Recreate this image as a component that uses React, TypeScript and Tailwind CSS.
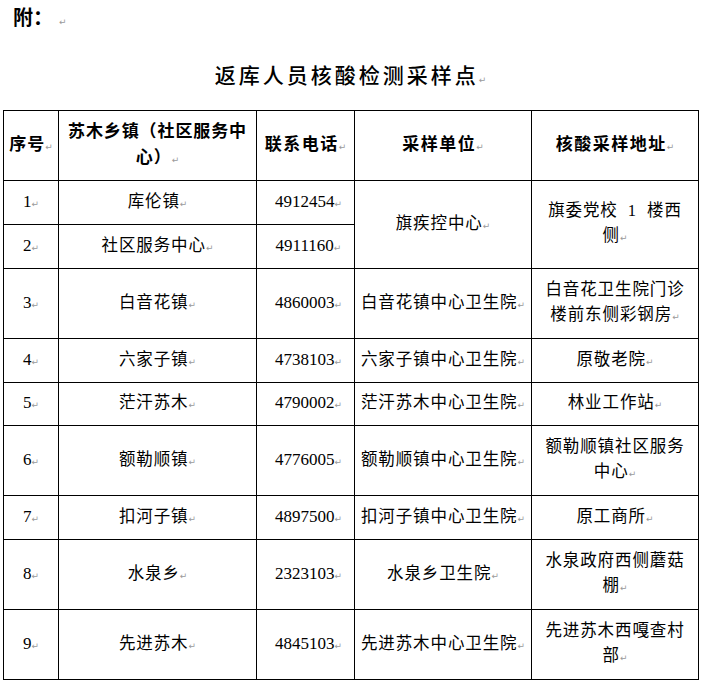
import React from "react";

const M = ({ c = "" }: { c?: string }) => (
  <span className={"font-['DejaVu_Sans',sans-serif] text-[9px] font-normal tracking-normal text-[#9a9a9a] " + c}>↵</span>
);

const td = "border border-black text-center align-middle p-0";
const zh = "text-[16.5px] tracking-[0.9px] leading-[25px] font-normal";
const num = "text-[17px] leading-[25px] font-normal";
const hd = "text-[17px] font-bold leading-[26px]";

type Row = { n: string; town: string; tel: string; unit: string; addr: React.ReactNode[]; h: string };

const rows: Row[] = [
  { n: "3", town: "白音花镇", tel: "4860003", unit: "白音花镇中心卫生院", addr: ["白音花卫生院门诊", "楼前东侧彩钢房"], h: "h-[70px]" },
  { n: "4", town: "六家子镇", tel: "4738103", unit: "六家子镇中心卫生院", addr: ["原敬老院"], h: "h-[44px]" },
  { n: "5", town: "茫汗苏木", tel: "4790002", unit: "茫汗苏木中心卫生院", addr: ["林业工作站"], h: "h-[43px]" },
  { n: "6", town: "额勒顺镇", tel: "4776005", unit: "额勒顺镇中心卫生院", addr: ["额勒顺镇社区服务", "中心"], h: "h-[70px]" },
  { n: "7", town: "扣河子镇", tel: "4897500", unit: "扣河子镇中心卫生院", addr: ["原工商所"], h: "h-[44px]" },
  { n: "8", town: "水泉乡", tel: "2323103", unit: "水泉乡卫生院", addr: ["水泉政府西侧蘑菇", "棚"], h: "h-[70px]" },
  { n: "9", town: "先进苏木", tel: "4845103", unit: "先进苏木中心卫生院", addr: ["先进苏木西嘎查村", "部"], h: "h-[70px]" },
];

const Addr = ({ lines }: { lines: React.ReactNode[] }) => (
  <div className={zh}>
    {lines.map((l, i) => (
      <div key={i} className="whitespace-nowrap">
        {l}
        {i === lines.length - 1 && <M />}
      </div>
    ))}
  </div>
);

const EndMark = () => (
  <td className="align-top p-0 pl-[2px] pt-[9px] border-0 leading-[10px]">
    <M />
  </td>
);

export default function App() {
  return (
    <div className="w-[701px] h-[682px] overflow-hidden bg-white text-black font-['Liberation_Serif','Noto_Sans_CJK_SC',serif]">
      <div className="pt-[5px] pl-[13px] text-[20px] font-bold leading-[26px] font-['Liberation_Serif','Noto_Sans_CJK_SC',sans-serif]">
        附：<M c="ml-[6px]" />
      </div>
      <div className="mt-[25px] text-center text-[21px] tracking-[3px] leading-[28px] font-medium font-['Noto_Sans_CJK_SC',sans-serif]">
        返库人员核酸检测采样点<M />
      </div>
      <table className="mt-[16px] ml-[3px] border-collapse table-fixed w-[705px]">
        <colgroup>
          <col className="w-[55px]" />
          <col className="w-[198px]" />
          <col className="w-[98px]" />
          <col className="w-[177px]" />
          <col className="w-[167px]" />
          <col className="w-[10px]" />
        </colgroup>
        <tbody>
          <tr className="h-[70px]">
            <td className={td}>
              <div className={hd + " tracking-[1px]"}>序号<M /></div>
            </td>
            <td className={td}>
              <div className={hd + " tracking-[0.9px]"}>
                <div className="whitespace-nowrap">苏木乡镇（社区服务中</div>
                <div>心）<M /></div>
              </div>
            </td>
            <td className={td}>
              <div className={hd + " tracking-[1.5px] whitespace-nowrap"}>联系电话<M /></div>
            </td>
            <td className={td}>
              <div className={hd + " tracking-[1.5px]"}>采样单位<M /></div>
            </td>
            <td className={td}>
              <div className={hd + " tracking-[1.5px] whitespace-nowrap"}>核酸采样地址<M /></div>
            </td>
            <EndMark />
          </tr>
          <tr className="h-[44px]">
            <td className={td}><div className={num}>1<M /></div></td>
            <td className={td}><div className={zh}>库伦镇<M /></div></td>
            <td className={td}><div className={num + " pl-[6px]"}>4912454<M /></div></td>
            <td className={td} rowSpan={2}><div className={zh}>旗疾控中心<M /></div></td>
            <td className={td} rowSpan={2}>
              <Addr lines={["旗委党校\u00a0\u00a01\u00a0\u00a0楼西", "侧"]} />
            </td>
            <EndMark />
          </tr>
          <tr className="h-[44px]">
            <td className={td}><div className={num}>2<M /></div></td>
            <td className={td}><div className={zh}>社区服务中心<M /></div></td>
            <td className={td}><div className={num + " pl-[6px]"}>4911160<M /></div></td>
            <EndMark />
          </tr>
          {rows.map((r) => (
            <tr key={r.n} className={r.h}>
              <td className={td}><div className={num}>{r.n}<M /></div></td>
              <td className={td}><div className={zh}>{r.town}<M /></div></td>
              <td className={td}><div className={num + " pl-[6px]"}>{r.tel}<M /></div></td>
              <td className={td}><div className={zh + " whitespace-nowrap"}>{r.unit}<M /></div></td>
              <td className={td}><Addr lines={r.addr} /></td>
              <EndMark />
            </tr>
          ))}
        </tbody>
      </table>
    </div>
  );
}
